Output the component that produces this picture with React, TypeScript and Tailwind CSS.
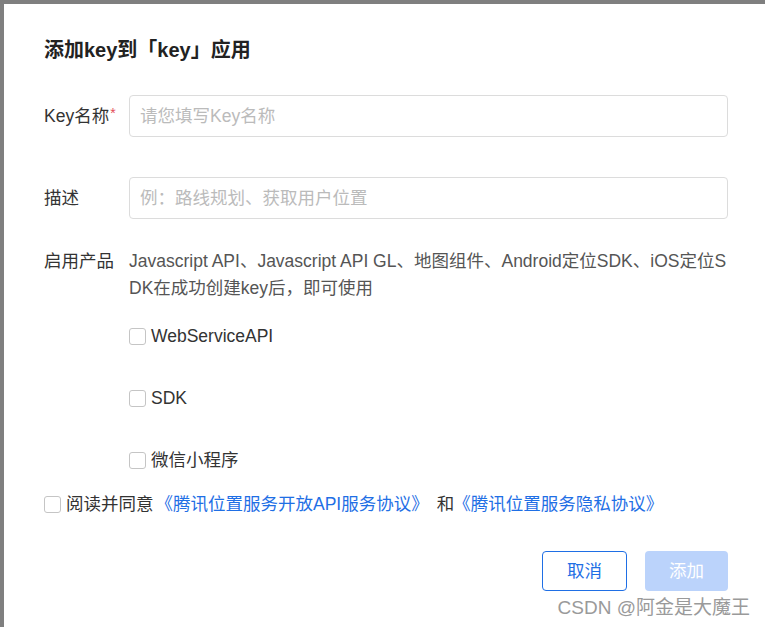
import React, { useState } from 'react';

const Box: React.FC<{ checked: boolean; onClick: () => void }> = ({ checked, onClick }) => (
    <span
        onClick={onClick}
        className={`inline-block w-[17px] h-[17px] rounded-[3px] border shrink-0 ${checked ? 'bg-[#0052d9] border-[#0052d9]' : 'bg-white border-[#c5c5c5]'}`}
    />
);

const App: React.FC = () => {
    const [name, setName] = useState('');
    const [desc, setDesc] = useState('');
    const [products, setProducts] = useState<Record<string, boolean>>({});
    const [agree, setAgree] = useState(false);

    const toggle = (k: string) => setProducts({ ...products, [k]: !products[k] });

    return (
        <div
            className="h-[627px] w-[765px] overflow-hidden bg-[#7f7f7f] pl-[4px] pt-[4px]"
            style={{ fontFamily: '"Liberation Sans", "Noto Sans CJK SC", sans-serif' }}
        >
            <div className="relative h-full bg-white pl-[40px] pr-[37px] pt-[33px]">
                <h2 className="text-[20px] leading-[26px] font-bold text-[#222]">添加key到「key」应用</h2>

                {/* key name */}
                <div className="flex items-center mt-[32px]">
                    <label className="w-[85px] text-[17.5px] text-[#333] leading-[24px]">
                        Key名称<span className="text-[#e34d59] text-[14px] align-top relative -top-[3px] ml-[1px]">*</span>
                    </label>
                    <input
                        className="flex-1 h-[42px] px-[10px] border border-[#dcdcdc] rounded-[4px] text-[17.5px] text-[#333] placeholder:text-[#bbbbbb] outline-none"
                        placeholder="请您填写Key名称"
                        value={name}
                        onChange={(e) => setName(e.target.value)}
                    />
                </div>

                {/* description */}
                <div className="flex items-center mt-[40px]">
                    <label className="w-[85px] text-[17.5px] text-[#333] leading-[24px]">描述</label>
                    <input
                        className="flex-1 h-[42px] px-[10px] border border-[#dcdcdc] rounded-[4px] text-[17.5px] text-[#333] placeholder:text-[#bbbbbb] outline-none"
                        placeholder="例：路线规划、获取用户位置"
                        value={desc}
                        onChange={(e) => setDesc(e.target.value)}
                    />
                </div>

                {/* products */}
                <div className="flex mt-[29px]">
                    <label className="w-[85px] text-[17.5px] text-[#333] leading-[27px]">启用产品</label>
                    <div className="flex-1">
                        <p className="text-[17.5px] leading-[27px] text-[#555] break-all">
                            Javascript API、Javascript API GL、地图组件、Android定位SDK、iOS定位SDK在成功创建key后，即可使用
                        </p>
                        <div className="mt-[22px] flex flex-col gap-[38px]">
                            {['WebServiceAPI', 'SDK', '微信小程序'].map((p) => (
                                <label key={p} className="flex items-center gap-[5px] h-[24px] text-[17.5px] text-[#333]">
                                    <Box checked={!!products[p]} onClick={() => toggle(p)} />
                                    {p}
                                </label>
                            ))}
                        </div>
                    </div>
                </div>

                {/* agreement */}
                <div className="flex items-center gap-[5px] mt-[20px] h-[24px] text-[17.5px]">
                    <Box checked={agree} onClick={() => setAgree(!agree)} />
                    <span className="text-[#333]">阅读并同意</span>
                    <span className="text-[#1f6fe5] ml-[-3px]">《腾讯位置服务开放API服务协议》</span>
                    <span className="text-[#333] ml-[3px]">和</span>
                    <span className="text-[#1f6fe5] ml-[-6px]">《腾讯位置服务隐私协议》</span>
                </div>

                {/* buttons */}
                <div className="flex justify-end gap-[18px] mt-[35px]">
                    <button className="w-[85px] h-[40px] rounded-[4px] border border-[#1f6fe5] text-[#1f6fe5] text-[17.5px] bg-white">
                        取消
                    </button>
                    <button
                        disabled={!agree}
                        className="w-[83px] h-[40px] rounded-[4px] bg-[#bbd3fb] text-white text-[17.5px]"
                    >
                        添加
                    </button>
                </div>

                <span className="absolute right-[15px] bottom-[8px] text-[19px] leading-[22px] text-[#9a9a9a]">
                    CSDN @阿金是大魔王
                </span>
            </div>
        </div>
    );
};

export default App;
